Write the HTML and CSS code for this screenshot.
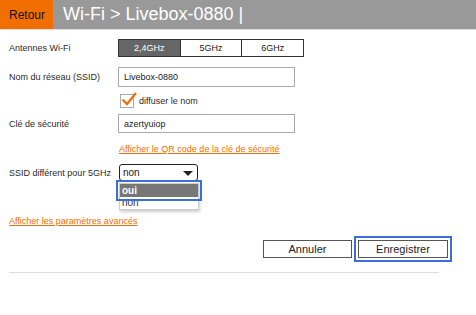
FILE: index.html
```html
<!DOCTYPE html>
<html lang="fr">
  <head>
    <meta charset="UTF-8" />
    <meta name="viewport" content="width=device-width, initial-scale=1.0" />
    <title>Wi-Fi - Livebox</title>
    <link rel="stylesheet" href="styles.css">
  </head>
  <body>
    <div class="topbar">
      <a class="back" href="#">Retour</a>
      <h1>Wi-Fi &gt; Livebox-0880 |</h1>
    </div>

    <div class="content">
      <div class="row row-bands">
        <span class="label">Antennes Wi-Fi</span>
        <div class="bands">
          <span class="band active">2,4GHz</span>
          <span class="band">5GHz</span>
          <span class="band">6GHz</span>
        </div>
      </div>

      <div class="row row-ssid">
        <span class="label">Nom du réseau (SSID)</span>
        <div class="field">Livebox-0880</div>
      </div>

      <div class="row row-check">
        <span></span>
        <label class="check">
          <span class="box">
            <svg width="18" height="16" viewBox="0 0 18 16">
              <path d="M2.5 8.5 L7 13 L16 2" fill="none" stroke="#f16e00" stroke-width="2.2" />
            </svg>
          </span>
          diffuser le nom
        </label>
      </div>

      <div class="row row-key">
        <span class="label">Clé de sécurité</span>
        <div class="field">azertyuiop</div>
      </div>

      <div class="row row-qr">
        <span></span>
        <a class="link" href="#">Afficher le QR code de la clé de sécurité</a>
      </div>

      <div class="row row-select">
        <span class="label">SSID différent pour 5GHz</span>
        <div class="select-wrap">
          <div class="select">
            non
            <span class="arrow"></span>
          </div>
          <ul class="dropdown">
            <li class="selected">oui</li>
            <li>non</li>
          </ul>
        </div>
      </div>

      <a class="link advanced" href="#">Afficher les paramètres avancés</a>

      <div class="actions">
        <button class="btn">Annuler</button>
        <button class="btn focused">Enregistrer</button>
      </div>

      <hr class="sep" />
    </div>
  </body>
</html>
```

FILE: styles.css
```css
* {
  margin: 0;
  padding: 0;
  box-sizing: border-box;
}

body {
  font-family: "Liberation Sans", Arial, sans-serif;
  background: white;
  color: #333;
  font-size: 9px;
}

.topbar {
  display: flex;
  align-items: stretch;
  height: 30px;
  background: #999;
  border-bottom: 1px solid #ddd;
}

.back {
  display: flex;
  align-items: center;
  width: 53px;
  padding-left: 9px;
  background: #f16e00;
  color: #111;
  font-size: 12px;
  text-decoration: none;
}

.topbar h1 {
  display: flex;
  align-items: center;
  padding-left: 10px;
  padding-bottom: 1px;
  color: white;
  font-size: 18px;
  font-weight: normal;
}

.content {
  padding: 0 28px 0 9px;
}

.row {
  display: grid;
  grid-template-columns: 109px auto;
  align-items: center;
}

.label {
  color: #2a2a2a;
  font-size: 9px;
  white-space: nowrap;
}

.row-bands {
  margin-top: 9px;
}

.bands {
  display: flex;
  width: 186px;
  height: 18px;
  border: 1px solid #333;
}

.band {
  flex: 1;
  display: flex;
  align-items: center;
  justify-content: center;
  font-size: 9px;
  color: #222;
  border-left: 1px solid #333;
}

.band:first-child {
  border-left: none;
}

.band.active {
  background: #666;
  color: white;
}

.row-ssid {
  margin-top: 10px;
}

.field {
  width: 177px;
  height: 20px;
  border: 1px solid #aaa;
  padding-left: 5px;
  display: flex;
  align-items: center;
  font-size: 9px;
  color: #222;
}

.row-key .field {
  height: 19px;
}

.row-check {
  margin-top: 7px;
}

.check {
  display: flex;
  align-items: center;
  gap: 5px;
  margin-left: 2px;
  font-size: 9px;
  color: #2a2a2a;
}

.box {
  position: relative;
  width: 14px;
  height: 14px;
  border: 1px solid #aaa;
}

.box svg {
  position: absolute;
  left: -1px;
  top: -4px;
}

.row-key {
  margin-top: 6px;
}

.row-qr {
  margin-top: 11px;
}

.link {
  color: #f16e00;
  font-size: 9px;
  text-decoration: underline;
}

.row-qr .link {
  margin-left: 1px;
}

.row-select {
  margin-top: 10px;
}

.select-wrap {
  position: relative;
  margin-left: 1px;
}

.select {
  position: relative;
  width: 79px;
  height: 17px;
  border: 1px solid #222;
  border-radius: 3px;
  padding-left: 3px;
  font-size: 10px;
  line-height: 15px;
  color: #222;
}

.arrow {
  position: absolute;
  right: 4px;
  top: 6px;
  border-left: 5px solid transparent;
  border-right: 5px solid transparent;
  border-top: 5px solid #222;
}

.dropdown {
  position: absolute;
  left: 0;
  top: 19px;
  width: 80px;
  list-style: none;
  background: white;
  border: 1px solid #ccc;
  box-shadow: 1px 2px 3px rgba(0, 0, 0, 0.2);
  font-size: 10px;
  color: #333;
  z-index: 2;
}

.dropdown li {
  height: 12px;
  line-height: 12px;
  padding-left: 2px;
}

.dropdown li.selected {
  background: #777;
  color: white;
  font-weight: bold;
  height: 13px;
  line-height: 13px;
  outline: 2px solid #3b6fd8;
  outline-offset: 2px;
}

.advanced {
  display: inline-block;
  margin-top: 35px;
}

.actions {
  display: flex;
  justify-content: flex-end;
  gap: 6px;
  margin-top: 14px;
}

.btn {
  height: 18px;
  width: 89px;
  background: white;
  border: 1px solid #555;
  font-family: "Liberation Sans", Arial, sans-serif;
  font-size: 11px;
  color: #222;
}

.btn.focused {
  width: 90px;
  outline: 2px solid #3b6fd8;
  outline-offset: 2px;
}

.sep {
  border: none;
  border-top: 1px solid #ddd;
  margin-top: 14px;
  margin-right: 9px;
}
```
